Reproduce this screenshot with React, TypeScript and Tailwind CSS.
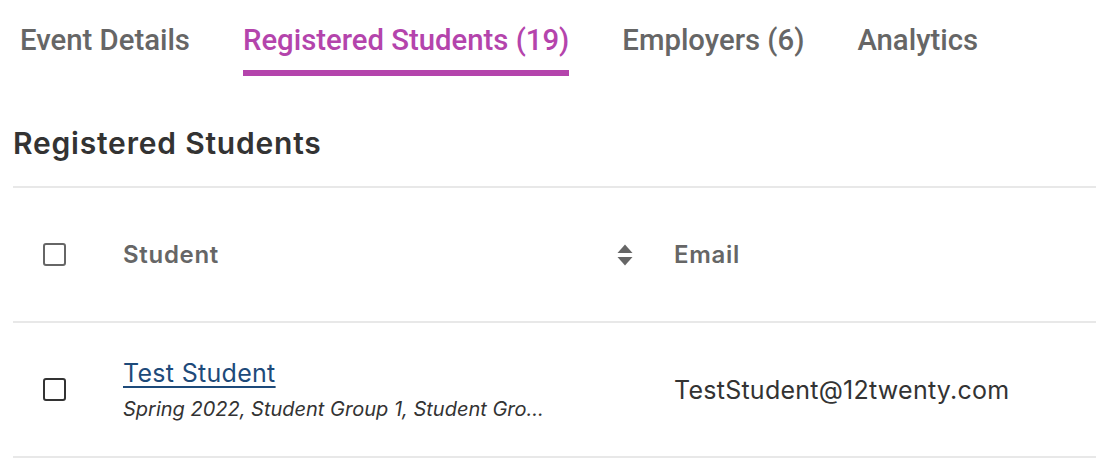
import { useState } from 'react';

const tabs = [
  { label: 'Event Details' },
  { label: 'Registered Students (19)' },
  { label: 'Employers (6)' },
  { label: 'Analytics' },
];

const students = [
  {
    name: 'Test Student',
    groups: 'Spring 2022, Student Group 1, Student Group 2, Student Group 3',
    email: 'TestStudent@12twenty.com',
  },
];

function Checkbox({ tone }: { tone: string }) {
  return <span className={`block h-[23px] w-[23px] rounded-[3px] border-[2.5px] ${tone}`} />;
}

function SortIcon() {
  return (
    <svg width="16" height="22" viewBox="0 0 16 22" className="fill-[#666666]">
      <path d="M8 0.5 L15.5 9 H0.5 Z" />
      <path d="M8 21.5 L15.5 13 H0.5 Z" />
    </svg>
  );
}

export default function App() {
  const [active, setActive] = useState(1);

  return (
    <div className="min-h-screen bg-white pl-[13px] font-['Inter',sans-serif] text-[#333333]">
      <nav className="flex gap-[39px] font-['Roboto',sans-serif]">
        {tabs.map((tab, i) => (
          <button
            key={tab.label}
            type="button"
            onClick={() => setActive(i)}
            className={`flex h-[76px] flex-col items-center justify-start px-[7px] pt-[20px] text-[29.3px] font-medium leading-[40px] ${
              active === i ? 'text-[#b444ac]' : 'text-[#666666]'
            }`}
          >
            <span>{tab.label}</span>
            <span className={`mt-[10px] h-[6px] w-full ${active === i ? 'bg-[#b444ac]' : 'bg-transparent'}`} />
          </button>
        ))}
      </nav>

      <h2 className="pt-[48px] pb-[24px] text-[30px] font-semibold leading-[38px] tracking-[0.8px] text-[#333333]">
        Registered Students
      </h2>

      <div className="border-t-2 border-[#e8e8e8]">
        <div className="grid h-[135px] grid-cols-[110px_551px_1fr] items-center border-b-2 border-[#e8e8e8] text-[24px] font-semibold tracking-[0.7px] text-[#666666]">
          <div className="pl-[30px]">
            <Checkbox tone="border-[#666666]" />
          </div>
          <div className="flex items-center justify-between pr-[41px]">
            <span>Student</span>
            <SortIcon />
          </div>
          <div>Email</div>
        </div>

        {students.map((s) => (
          <div
            key={s.email}
            className="grid h-[135px] grid-cols-[110px_551px_1fr] items-center border-b-2 border-[#e8e8e8]"
          >
            <div className="pl-[30px]">
              <Checkbox tone="border-[#333333]" />
            </div>
            <div className="min-w-0 pr-[128px]">
              <a
                href="#"
                className="text-[25px] leading-[32px] tracking-[0.3px] text-[#1d4a7a] underline decoration-[2px] underline-offset-[4px]"
              >
                {s.name}
              </a>
              <p className="mt-[6px] truncate text-[20px] italic leading-[28px] text-[#333333]">{s.groups}</p>
            </div>
            <div className="pt-[2px] text-[25px] tracking-[0.25px] text-[#333333]">{s.email}</div>
          </div>
        ))}
      </div>
    </div>
  );
}
